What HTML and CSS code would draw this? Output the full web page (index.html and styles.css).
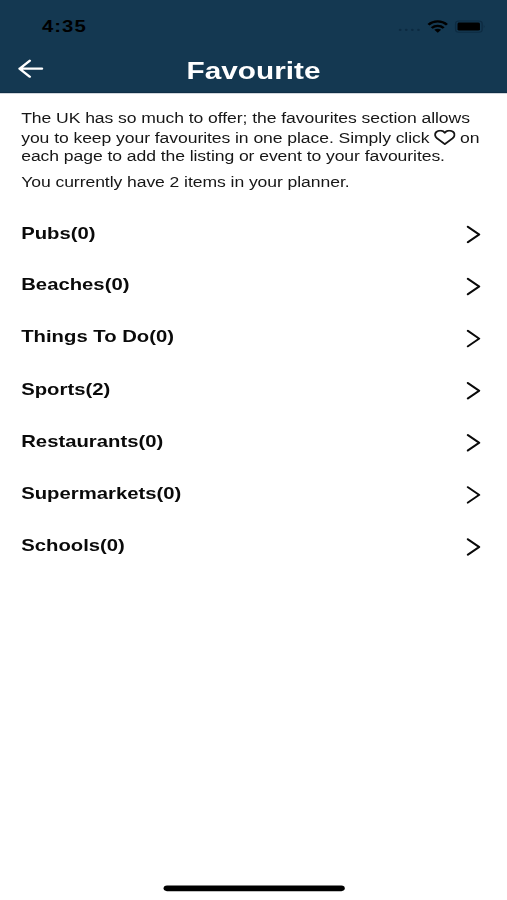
FILE: index.html
```html
<!DOCTYPE html>
<html lang="en">

<head>
    <meta charset="UTF-8">
    <meta name="viewport" content="width=device-width, initial-scale=1.0">
    <title>Favourite</title>
    <link rel="stylesheet" href="styles.css">
</head>

<body>
    <div class="screen">
        <header class="header">
            <div class="status-bar">
                <span class="time">4:35</span>
                <svg class="status-icons" width="66" height="14" viewBox="0 0 66 14">
                    <g fill="#0c2a41">
                        <circle cx="3" cy="10" r="1" />
                        <circle cx="7.5" cy="10" r="1" />
                        <circle cx="12" cy="10" r="1" />
                        <circle cx="16.5" cy="10" r="1" />
                    </g>
                    <g fill="none" stroke="#000" stroke-width="2">
                        <path d="M23.9 5.3C27.7 1.3 33.8 1.3 37.6 5.3" />
                        <path d="M26.3 8.2C28.9 5.6 32.6 5.6 35.2 8.2" />
                    </g>
                    <path d="M28.2 9.8Q30.8 7.9 33.3 9.8L30.8 12.6Z" />
                    <rect x="44" y="1.9" width="19.6" height="10.2" rx="2.5" fill="none" stroke="#0d2b42" />
                    <rect x="45.4" y="3.4" width="16.6" height="7.2" rx="1.3" />
                    <path d="M64.8 5.2v3.6q1.3-1.8 0-3.6" fill="#0d2b42" />
                </svg>
            </div>
            <div class="nav">
                <svg class="back" width="20" height="18" viewBox="0 0 20 18">
                    <path d="M9 1.8L1.5 9L9 16.2M1.5 9H18" />
                </svg>
                <h1>Favourite</h1>
            </div>
        </header>

        <main class="content">
            <p class="intro">
                The UK has so much to offer; the favourites section allows<br>
                you to keep your favourites in one place. Simply click
                <svg class="heart" width="16" height="14" viewBox="0 0 16 14">
                    <path d="M8 2.8C6.7 0.5 3.5 0.2 1.8 2C0.3 3.7 0.7 6.2 2.3 7.9L8 13L13.7 7.9C15.3 6.2 15.7 3.7 14.2 2C12.5 0.2 9.3 0.5 8 2.8Z" />
                </svg>
                on<br>
                each page to add the listing or event to your favourites.
            </p>
            <p class="count">You currently have 2 items in your planner.</p>

            <ul class="list">
                <li>Pubs(0)<svg class="arrow" width="11" height="17" viewBox="0 0 11 17"><path d="M1 1.5L9.4 8.5L1 15.5" /></svg></li>
                <li>Beaches(0)<svg class="arrow" width="11" height="17" viewBox="0 0 11 17"><path d="M1 1.5L9.4 8.5L1 15.5" /></svg></li>
                <li>Things To Do(0)<svg class="arrow" width="11" height="17" viewBox="0 0 11 17"><path d="M1 1.5L9.4 8.5L1 15.5" /></svg></li>
                <li>Sports(2)<svg class="arrow" width="11" height="17" viewBox="0 0 11 17"><path d="M1 1.5L9.4 8.5L1 15.5" /></svg></li>
                <li>Restaurants(0)<svg class="arrow" width="11" height="17" viewBox="0 0 11 17"><path d="M1 1.5L9.4 8.5L1 15.5" /></svg></li>
                <li>Supermarkets(0)<svg class="arrow" width="11" height="17" viewBox="0 0 11 17"><path d="M1 1.5L9.4 8.5L1 15.5" /></svg></li>
                <li>Schools(0)<svg class="arrow" width="11" height="17" viewBox="0 0 11 17"><path d="M1 1.5L9.4 8.5L1 15.5" /></svg></li>
            </ul>
        </main>

        <div class="home-bar"></div>
    </div>
</body>

</html>
```
FILE: styles.css
```css
* {
    box-sizing: border-box;
}

body {
    margin: 0;
    height: 100vh;
    overflow: hidden;
    background-color: #fff;
    font-family: "Liberation Sans", Arial, sans-serif;
}

.screen {
    display: flex;
    flex-direction: column;
    width: 375px;
    height: 812px;
    transform: scale(1.352, 1.10837);
    transform-origin: 0 0;
}

.header {
    height: 83.5px;
    background-color: #143851;
    border-bottom: 1px solid #0f2e46;
}

.status-bar {
    display: flex;
    align-items: center;
    justify-content: space-between;
    height: 44px;
    padding: 3px 16px 0 31px;
}

.time {
    color: #000;
    font-size: 15px;
    font-weight: bold;
    letter-spacing: 0.8px;
}

.nav {
    display: grid;
    grid-template-columns: 40px 1fr 40px;
    align-items: center;
    height: 39px;
    padding: 0 12px;
}

.back {
    margin: -4px 0 0 1px;
    fill: none;
    stroke: #fff;
    stroke-width: 2;
    stroke-linecap: round;
    stroke-linejoin: round;
}

h1 {
    margin: 0;
    color: #fff;
    font-size: 22px;
    line-height: 26px;
    text-align: center;
}

.content {
    flex: 1;
    padding: 15.1px 16px 0 15.7px;
}

.intro,
.count {
    margin: 0;
    color: #161616;
    font-size: 13px;
    line-height: 15px;
    letter-spacing: -0.055px;
    white-space: nowrap;
}

.heart {
    margin: 3px -0.3px 2px;
    vertical-align: -4px;
    fill: none;
    stroke: #161616;
    stroke-width: 1.5;
    stroke-linejoin: round;
}

.count {
    margin-top: 9px;
}

.list {
    margin: 15px 0 0;
    padding: 0;
    list-style: none;
}

.list li {
    display: flex;
    align-items: center;
    justify-content: space-between;
    height: 46.9px;
    padding-right: 3.4px;
    color: #0a0a0a;
    font-size: 15px;
    font-weight: bold;
}

.arrow {
    margin-top: 3.5px;
    fill: none;
    stroke: #0a0a0a;
    stroke-width: 1.7;
    stroke-linecap: round;
    stroke-linejoin: round;
}

.home-bar {
    width: 134px;
    height: 5px;
    margin: 0 auto 8px;
    border-radius: 3px;
    background-color: #000;
}
```
